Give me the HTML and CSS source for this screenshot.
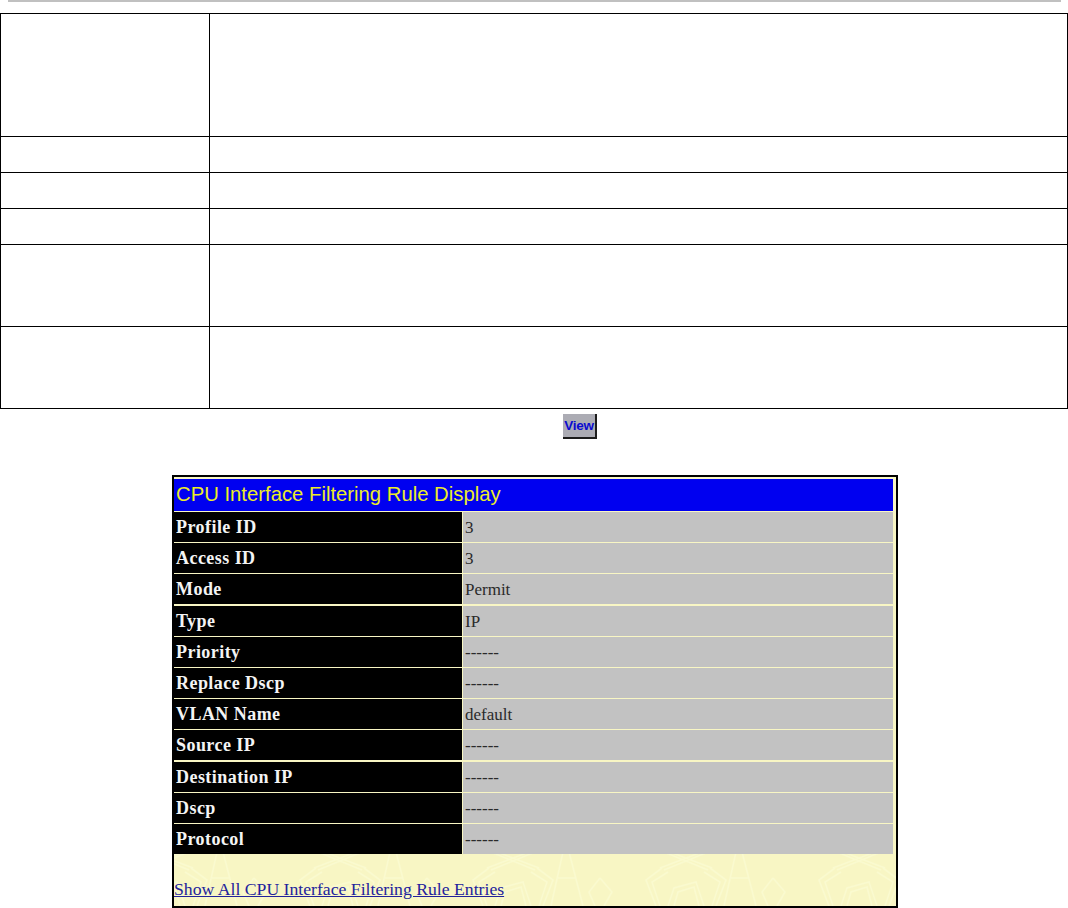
FILE: index.html
```html
<!DOCTYPE html>
<html>
<head>
<meta charset="utf-8">
<title>CPU Interface Filtering Rule Display</title>
<link rel="stylesheet" href="styles.css">
</head>
<body>
<div class="rule"></div>
<div class="doc">
  <div class="doc-row h-123"><div class="doc-k"></div><div class="doc-v"></div></div>
  <div class="doc-row h-36"><div class="doc-k"></div><div class="doc-v"></div></div>
  <div class="doc-row h-36"><div class="doc-k"></div><div class="doc-v"></div></div>
  <div class="doc-row h-36"><div class="doc-k"></div><div class="doc-v"></div></div>
  <div class="doc-row h-82"><div class="doc-k"></div><div class="doc-v"></div></div>
  <div class="doc-row h-82"><div class="doc-k"></div><div class="doc-v"></div></div>
</div>
<div class="view-line"><span class="view-btn">View</span></div>
<div class="card">
  <div class="card-title">CPU Interface Filtering Rule Display</div>
  <div class="rows">
    <div class="k">Profile ID</div><div class="v">3</div>
    <div class="k">Access ID</div><div class="v">3</div>
    <div class="k">Mode</div><div class="v">Permit</div>
    <div class="k">Type</div><div class="v">IP</div>
    <div class="k">Priority</div><div class="v">------</div>
    <div class="k">Replace Dscp</div><div class="v">------</div>
    <div class="k">VLAN Name</div><div class="v">default</div>
    <div class="k">Source IP</div><div class="v">------</div>
    <div class="k">Destination IP</div><div class="v">------</div>
    <div class="k">Dscp</div><div class="v">------</div>
    <div class="k">Protocol</div><div class="v">------</div>
  </div>
  <a class="back" href="#">Show All CPU Interface Filtering Rule Entries</a>
</div>
</body>
</html>
```
FILE: styles.css
```css
html, body { margin: 0; padding: 0; background: #fff; }
body { width: 1068px; height: 908px; overflow: hidden; font-family: "Liberation Serif", serif; }
.rule { height: 2px; margin: 0 7px 0 8px; background: #c0c0c0; }
.doc { margin-top: 11px; width: 1068px; box-sizing: border-box; border: 1px solid #000; border-bottom: 0; }
.doc-row { display: flex; border-bottom: 1px solid #000; box-sizing: border-box; }
.doc-k { width: 208px; border-right: 1px solid #000; }
.doc-v { flex: 1; }
.h-123 { height: 123px; }
.h-36 { height: 36px; }
.h-82 { height: 82px; }
.view-line { height: 66px; padding: 5px 0 0 563px; box-sizing: border-box; }
.view-btn { display: block; width: 34px; height: 25px; box-sizing: border-box; background: #acacb4; border-right: 2px solid #1c1c1c; border-bottom: 2px solid #1c1c1c; color: #0a0ad0; font: bold 13.5px/24px "Liberation Sans", sans-serif; text-align: center; letter-spacing: -0.2px; }
.card {
  margin-left: 172px; width: 726px; height: 433px; box-sizing: border-box;
  border: 2px solid #000; padding: 2px 3px 0 0;
  background-color: #f8f6c4;
  background-repeat: repeat-x;
  background-position: 80px bottom;
  background-image: url("data:image/svg+xml,%3Csvg xmlns='http://www.w3.org/2000/svg' width='173' height='54'%3E%3Cg fill='none' stroke='%23fafacf' stroke-width='1.6'%3E%3Cpath d='M64 0L108 18M70 0L112 16M108 0L64 18M102 0L60 16'/%3E%3Cpath d='M62 16L46 28L56 54M68 20L52 30L60 54M110 16L126 28L116 54M104 20L120 30L112 54'/%3E%3Cpath d='M68 54L74 36L96 30L104 54M74 54L78 40L94 35L99 54'/%3E%3Cpath d='M136 0L124 54M142 0L156 54M131 26L148 26'/%3E%3Cpath d='M0 26L12 40L4 54M173 26L162 40L168 54'/%3E%3C/g%3E%3C/svg%3E");
}
.card-title { height: 32px; background: #0000f0; color: #ecec28; font: 20.3px/31px "Liberation Sans", sans-serif; padding-left: 2px; }
.rows { display: grid; grid-template-columns: 288px 1fr; grid-auto-rows: 30px; gap: 1.2px 1px; margin-top: 1px; }
.k { background: #000; color: #f4f4f4; font: bold 18px/31px "Liberation Serif", serif; letter-spacing: 0.45px; padding-left: 2px; }
.v { background: #c2c2c2; color: #2a2a2a; font: 17px/31px "Liberation Serif", serif; padding-left: 2px; }
.back { display: block; margin-top: 25px; color: #22229c; font: 17.7px/20px "Liberation Serif", serif; text-decoration: underline; }
```
